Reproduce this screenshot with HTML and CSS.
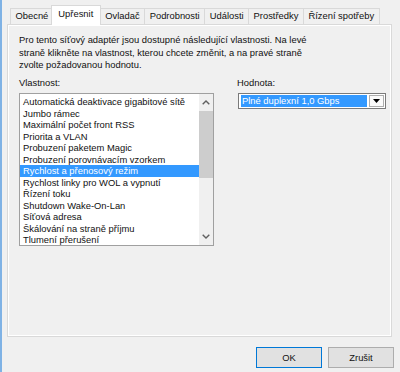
FILE: index.html
```html
<!DOCTYPE html>
<html lang="cs">
<head>
    <meta charset="UTF-8">
    <title>Vlastnosti adaptéru</title>
    <link rel="stylesheet" href="styles.css">
</head>
<body>
    <div class="dialog">
        <div class="tabs">
            <div class="tab">Obecné</div>
            <div class="tab active">Upřesnit</div>
            <div class="tab">Ovladač</div>
            <div class="tab">Podrobnosti</div>
            <div class="tab">Události</div>
            <div class="tab">Prostředky</div>
            <div class="tab">Řízení spotřeby</div>
        </div>

        <div class="panel">
            <p class="intro">Pro tento síťový adaptér jsou dostupné následující vlastnosti. Na levé<br>straně klikněte na vlastnost, kterou chcete změnit, a na pravé straně<br>zvolte požadovanou hodnotu.</p>

            <div class="props">
                <div class="col-left">
                    <div class="label">Vlastnost:</div>
                    <div class="listbox">
                        <ul class="items">
                            <li>Automatická deaktivace gigabitové sítě</li>
                            <li>Jumbo rámec</li>
                            <li>Maximální počet front RSS</li>
                            <li>Priorita a VLAN</li>
                            <li>Probuzení paketem Magic</li>
                            <li>Probuzení porovnávacím vzorkem</li>
                            <li class="selected">Rychlost a přenosový režim</li>
                            <li>Rychlost linky pro WOL a vypnutí</li>
                            <li>Řízení toku</li>
                            <li>Shutdown Wake-On-Lan</li>
                            <li>Síťová adresa</li>
                            <li>Škálování na straně příjmu</li>
                            <li>Tlumení přerušení</li>
                        </ul>
                        <div class="scrollbar">
                            <div class="arrow">
                                <svg width="8" height="5" viewBox="0 0 8 5"><path d="M0.7 4.3 L4 1 L7.3 4.3" fill="none" stroke="#606060" stroke-width="1.4"/></svg>
                            </div>
                            <div class="track"><div class="thumb"></div></div>
                            <div class="arrow">
                                <svg width="8" height="5" viewBox="0 0 8 5"><path d="M0.7 0.7 L4 4 L7.3 0.7" fill="none" stroke="#606060" stroke-width="1.4"/></svg>
                            </div>
                        </div>
                    </div>
                </div>

                <div class="col-right">
                    <div class="label">Hodnota:</div>
                    <div class="combo">
                        <span class="combo-value">Plné duplexní 1,0 Gbps</span>
                        <span class="combo-btn">
                            <svg width="7" height="4" viewBox="0 0 7 4"><path d="M0 0 H7 L3.5 4 Z" fill="#000"/></svg>
                        </span>
                    </div>
                </div>
            </div>
        </div>

        <div class="buttons">
            <button class="btn default">OK</button>
            <button class="btn">Zrušit</button>
        </div>
    </div>
</body>
</html>
```

FILE: styles.css
```css
body { margin: 0; background: #f0f0f0; font-family: 'Liberation Sans', Arial, sans-serif; font-size: 9.4px; color: #111; }
.dialog { height: 372px; box-sizing: border-box; border-left: 2px solid #7fb2e5; padding: 5px 6px 0 5px; overflow: hidden; }

/* tab strip */
.tabs { display: flex; align-items: flex-end; height: 19px; margin-left: 3px; }
.tab { height: 16px; line-height: 14px; padding: 0 4.5px; box-sizing: border-box; border: 1px solid #d9d9d9; border-bottom: none; margin-right: -1px; background: #f0f0f0; white-space: nowrap; }
.tab.active { height: 20px; line-height: 16px; background: #fff; padding: 0 6.5px; margin: 0 -1px -1px -2px; position: relative; z-index: 1; }

/* tab page */
.panel { height: 313px; box-sizing: border-box; margin-right: 2px; border: 1px solid #d9d9d9; box-shadow: inset 0 0 0 1px #fff; padding: 9px 4px 0 11px; }
.intro { margin: 0; line-height: 12.5px; }
.props { display: flex; margin-top: 5.5px; }
.label { height: 12px; line-height: 12px; margin-bottom: 4px; }
.col-left { width: 195px; flex-shrink: 0; }
.col-right { margin-left: 23px; flex-shrink: 0; }

.listbox { display: flex; height: 153px; box-sizing: border-box; border: 1px solid #a0a0a0; background: #fff; }
.items { flex: 1; list-style: none; margin: 0; padding: 2px 0 0 0; }
.items li { height: 11.5px; line-height: 11.5px; padding-left: 3px; white-space: nowrap; }
.items li.selected { background: #3399ff; color: #fff; }

.scrollbar { width: 14px; display: flex; flex-direction: column; background: #f0f0f0; }
.arrow { height: 17px; display: flex; align-items: center; justify-content: center; }
.track { flex: 1; }
.thumb { height: 67px; background: #cdcdcd; }

.combo { display: flex; margin-left: 1px; width: 148px; height: 16px; box-sizing: border-box; border: 1px solid #7a7a7a; background: #fff; }
.combo-value { flex: 1; margin: 1px 2px 1px 2px; padding-left: 1px; line-height: 12px; background: #3399ff; color: #fff; }
.combo-btn { width: 15px; margin: 1px 1px 1px 0; box-sizing: border-box; border: 1px solid #adadad; background: #fafafa; display: flex; align-items: center; justify-content: center; }

/* dialog buttons */
.buttons { display: flex; justify-content: flex-end; gap: 6px; margin-top: 10px; }
.btn { width: 66px; height: 21px; padding: 0; font: inherit; color: #111; background: #e1e1e1; border: 1px solid #adadad; }
.btn.default { border-color: #0078d7; }
```
